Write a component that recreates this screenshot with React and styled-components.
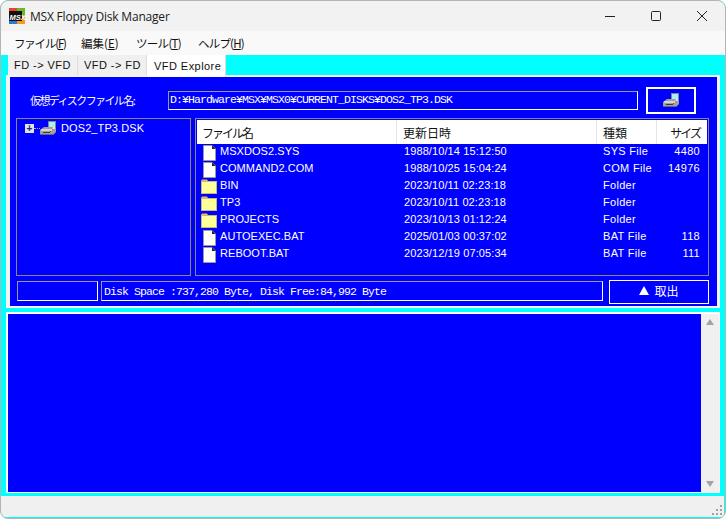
import React from "react";
import styled, { createGlobalStyle } from "styled-components";

const sans = `"Liberation Sans", Arial, sans-serif`;
const jp = `"Noto Sans CJK JP", sans-serif`;
const mono = `"Liberation Mono", "Courier New", monospace`;

const FILES = [
	{ name: "MSXDOS2.SYS", date: "1988/10/14 15:12:50", type: "SYS File", size: "4480", icon: "file" },
	{ name: "COMMAND2.COM", date: "1988/10/25 15:04:24", type: "COM File", size: "14976", icon: "file" },
	{ name: "BIN", date: "2023/10/11 02:23:18", type: "Folder", size: "", icon: "folder" },
	{ name: "TP3", date: "2023/10/11 02:23:18", type: "Folder", size: "", icon: "folder" },
	{ name: "PROJECTS", date: "2023/10/13 01:12:24", type: "Folder", size: "", icon: "folder" },
	{ name: "AUTOEXEC.BAT", date: "2025/01/03 00:37:02", type: "BAT File", size: "118", icon: "file" },
	{ name: "REBOOT.BAT", date: "2023/12/19 07:05:34", type: "BAT File", size: "111", icon: "file" },
];

const MENUS = [
	{ label: "ファイル", key: "F", width: 67, tight: 1.2 },
	{ label: "編集", key: "E", width: 55, tight: 0 },
	{ label: "ツール", key: "T", width: 62, tight: 0.7 },
	{ label: "ヘルプ", key: "H", width: 60, tight: 0.8 },
];

const Logo = () => (
	<svg width="16" height="16" viewBox="0 0 16 16">
		<rect x="0" y="0" width="8" height="8" fill="#e8442a" />
		<rect x="8" y="0" width="8" height="8" fill="#6cb52d" />
		<rect x="8" y="8" width="8" height="8" fill="#f59a1b" />
		<rect x="0" y="8" width="8" height="8" fill="#2a78d0" />
		<rect x="0" y="3" width="13" height="10" fill="#111" />
		<text x="0.5" y="11.5" fontFamily={sans} fontSize="7.5" fontWeight="700" fontStyle="italic" fill="#fff">
			MSX
		</text>
	</svg>
);

const Drive = () => (
	<svg width="17" height="15" viewBox="0 0 17 15">
		<rect x="8" y="0" width="8" height="9" fill="#7f8a90" />
		<rect x="9" y="1" width="6" height="5" fill="#a8f0f4" />
		<rect x="9" y="6" width="6" height="2" fill="#e4e8ea" />
		<polygon points="4,6 13,6 12,9 16,7 16,11 13,14 1,14 0,13 0,9" fill="#a0a0a0" />
		<rect x="1" y="8" width="11" height="2" fill="#d4d4d4" />
		<rect x="3" y="11" width="7" height="1" fill="#3c3c3c" />
		<rect x="10" y="10" width="1" height="1" fill="#d02020" />
		<rect x="1" y="13" width="12" height="1" fill="#6c6c6c" />
	</svg>
);

const FileIcon = () => (
	<svg width="13" height="16" viewBox="0 0 13 16">
		<path d="M0.5 0.5H9L12.5 4V15.5H0.5Z" fill="#fff" stroke="#9a9a9a" />
		<path d="M9 0.5L12.5 4H9Z" fill="#222" />
	</svg>
);

const FolderIcon = () => (
	<svg width="16" height="15" viewBox="0 0 16 15">
		<path d="M0 2L1 0.5H6L7 2H16V3H0Z" fill="#f4b860" />
		<rect x="0.5" y="2.5" width="15" height="12" fill="#ffff99" stroke="#c8b878" />
	</svg>
);

const MinimizeGlyph = () => (
	<svg width="10" height="10" viewBox="0 0 10 10">
		<path d="M0 5.5H10" stroke="#222" strokeWidth="1" />
	</svg>
);

const MaximizeGlyph = () => (
	<svg width="10" height="10" viewBox="0 0 10 10">
		<rect x="0.5" y="0.5" width="9" height="9" rx="1" fill="none" stroke="#222" />
	</svg>
);

const CloseGlyph = () => (
	<svg width="10" height="10" viewBox="0 0 10 10">
		<path d="M0 0L10 10M10 0L0 10" stroke="#222" strokeWidth="1" />
	</svg>
);

const App = () => (
	<>
		<GlobalStyle />
		<Window>
			<TitleBar>
				<Logo />
				<Title>MSX Floppy Disk Manager</Title>
				<Controls>
					<ControlButton>
						<MinimizeGlyph />
					</ControlButton>
					<ControlButton>
						<MaximizeGlyph />
					</ControlButton>
					<ControlButton>
						<CloseGlyph />
					</ControlButton>
				</Controls>
			</TitleBar>
			<MenuBar>
				{MENUS.map((m) => (
					<MenuItem key={m.key} $width={m.width} $tight={m.tight}>
						{m.label}(<u>{m.key}</u>)
					</MenuItem>
				))}
			</MenuBar>
			<Workspace>
				<Tabs>
					<Tab $w={70}>FD -&gt; VFD</Tab>
					<Tab $w={69}>VFD -&gt; FD</Tab>
					<Tab $w={79} $active>
						VFD Explore
					</Tab>
				</Tabs>
				<TabPanel>
					<BluePane>
						<PathRow>
							<PathLabel>仮想ディスクファイル名:</PathLabel>
							<PathField>D:¥Hardware¥MSX¥MSX0¥CURRENT_DISKS¥DOS2_TP3.DSK</PathField>
							<MountButton>
								<Drive />
							</MountButton>
						</PathRow>
						<Browser>
							<TreePane>
								<TreeRow>
									<Expander>+</Expander>
									<TreeDots />
									<Drive />
									<TreeLabel>DOS2_TP3.DSK</TreeLabel>
								</TreeRow>
							</TreePane>
							<ListPane>
								<ListHeader>
									<HeaderCell $w={200}>ファイル名</HeaderCell>
									<HeaderCell $w={200} $plain>
										更新日時
									</HeaderCell>
									<HeaderCell $w={60} $plain>
										種類
									</HeaderCell>
									<HeaderCell $w={50} $right>
										サイズ
									</HeaderCell>
								</ListHeader>
								{FILES.map((f) => (
									<FileRow key={f.name}>
										<NameCell>
											<IconSlot>{f.icon === "file" ? <FileIcon /> : <FolderIcon />}</IconSlot>
											<FileName>{f.name}</FileName>
										</NameCell>
										<DateCell>{f.date}</DateCell>
										<TypeCell>{f.type}</TypeCell>
										<SizeCell>{f.size}</SizeCell>
									</FileRow>
								))}
							</ListPane>
						</Browser>
						<FooterRow>
							<BlankBox />
							<StatusBox>Disk Space :737,280 Byte, Disk Free:84,992 Byte</StatusBox>
							<EjectButton>
								<EjectMark />
								取出
							</EjectButton>
						</FooterRow>
					</BluePane>
				</TabPanel>
				<LogPane>
					<LogText />
					<ScrollBar>
						<ScrollArrow />
						<ScrollArrow $down />
					</ScrollBar>
				</LogPane>
			</Workspace>
			<StatusBar>
				<Grip viewBox="0 0 11 11" width="11" height="11">
					<rect x="8" y="0" width="2" height="2" />
					<rect x="4" y="4" width="2" height="2" />
					<rect x="8" y="4" width="2" height="2" />
					<rect x="0" y="8" width="2" height="2" />
					<rect x="4" y="8" width="2" height="2" />
					<rect x="8" y="8" width="2" height="2" />
				</Grip>
			</StatusBar>
		</Window>
	</>
);

const GlobalStyle = createGlobalStyle`
	html, body {
		margin: 0;
		padding: 0;
		background: #ffffff;
		overflow: hidden;
	}
	* {
		box-sizing: border-box;
	}
`;

const Window = styled.div`
	display: flex;
	flex-direction: column;
	width: 726px;
	height: 519px;
	padding-bottom: 1px;
	overflow: hidden;
	border: 1px solid #b4b4b4;
	border-radius: 8px;
	background: #00ffff;
`;

const TitleBar = styled.div`
	display: flex;
	align-items: center;
	flex: none;
	height: 30px;
	padding-left: 8px;
	background: #f2f2f2;
`;
const Title = styled.div`
	margin-left: 5px;
	font-family: "Open Sans", sans-serif;
	font-size: 12px;
	letter-spacing: -0.2px;
	color: #1a1a1a;
`;
const Controls = styled.div`
	display: flex;
	margin-left: auto;
	height: 100%;
`;
const ControlButton = styled.div`
	display: flex;
	align-items: center;
	justify-content: center;
	width: 46px;
`;

const MenuBar = styled.div`
	display: flex;
	align-items: center;
	flex: none;
	height: 24px;
	padding-left: 13px;
	background: #f9f9f9;
`;
const MenuItem = styled.div`
	width: ${(p) => p.$width}px;
	font-family: ${jp};
	font-size: 11.5px;
	letter-spacing: ${(p) => -p.$tight}px;
	color: #111;
	white-space: nowrap;
`;

const Workspace = styled.div`
	flex: 1;
	padding: 0 4px 0 5px;
`;

const Tabs = styled.div`
	display: flex;
	align-items: flex-end;
	height: 22px;
	margin-bottom: -2px;
	padding-left: 2px;
`;
const Tab = styled.div`
	position: relative;
	z-index: 1;
	display: flex;
	align-items: center;
	width: ${(p) => p.$w}px;
	height: ${(p) => (p.$active ? 22 : 20)}px;
	margin-bottom: ${(p) => (p.$active ? 0 : 2)}px;
	padding-left: ${(p) => (p.$active ? 7 : 6)}px;
	border-right: 1px solid #dcdcdc;
	background: ${(p) => (p.$active ? "#ffffff" : "#f0f0f0")};
	font-family: ${sans};
	font-size: 11px;
	letter-spacing: 0.45px;
	color: #111;
`;

const TabPanel = styled.div`
	width: 714px;
	padding: 2px 3px 2px 4px;
	background: #f4f4f4;
`;
const BluePane = styled.div`
	display: flex;
	flex-direction: column;
	gap: 4px;
	height: 229px;
	padding: 10px 8px 0 6px;
	background: #0000ff;
	color: #ffffff;
`;

const PathRow = styled.div`
	display: flex;
	align-items: center;
	height: 27px;
	padding-left: 14px;
`;
const PathLabel = styled.div`
	width: 138px;
	padding-bottom: 1px;
	font-family: ${jp};
	font-size: 11px;
	letter-spacing: -1.6px;
	white-space: nowrap;
`;
const PathField = styled.div`
	display: flex;
	align-items: center;
	width: 470px;
	height: 19px;
	padding: 0 0 3px 1px;
	border: 1px solid #ffffff;
	border-top-color: #9a9a9a;
	border-left-color: #9a9a9a;
	font-family: ${mono};
	font-size: 11.5px;
	letter-spacing: -0.9px;
	white-space: nowrap;
`;
const MountButton = styled.div`
	display: flex;
	align-items: center;
	justify-content: center;
	width: 50px;
	height: 27px;
	margin-left: 8px;
	border: 2px solid #ffffff;
`;

const Browser = styled.div`
	display: flex;
	gap: 4px;
	height: 158px;
`;
const TreePane = styled.div`
	width: 176px;
	padding: 2px 0 0 8px;
	border: 1px solid #888888;
`;
const TreeRow = styled.div`
	display: flex;
	align-items: center;
	height: 15px;
`;
const Expander = styled.div`
	display: flex;
	align-items: center;
	justify-content: center;
	width: 9px;
	height: 9px;
	background: #dfe2ea;
	font-family: ${sans};
	font-size: 10px;
	line-height: 9px;
	font-weight: 700;
	color: #1a2a6a;
`;
const TreeDots = styled.div`
	width: 6px;
	border-top: 1px dotted #b0b0c8;
`;
const TreeLabel = styled.div`
	margin-left: 4px;
	padding-bottom: 1px;
	font-family: ${sans};
	font-size: 11px;
	letter-spacing: 0.1px;
`;

const ListPane = styled.div`
	width: 514px;
	padding: 1px;
	border: 1px solid #888888;
`;
const ListHeader = styled.div`
	display: flex;
	height: 24px;
	background: #ffffff;
	color: #111;
`;
const HeaderCell = styled.div`
	display: flex;
	align-items: center;
	justify-content: ${(p) => (p.$right ? "flex-end" : "flex-start")};
	width: ${(p) => p.$w}px;
	padding: ${(p) => (p.$right ? "0 7px 0 0" : p.$plain ? "0 0 0 6px" : "0 0 0 5px")};
	border-right: ${(p) => (p.$right ? "none" : "1px solid #e4e4e4")};
	font-family: ${jp};
	font-size: 12px;
	letter-spacing: ${(p) => (p.$plain ? 0 : -2)}px;
	white-space: nowrap;
`;
const FileRow = styled.div`
	display: flex;
	align-items: center;
	height: 17px;
	font-family: ${sans};
	font-size: 11px;
	white-space: nowrap;
`;
const NameCell = styled.div`
	display: flex;
	align-items: center;
	width: 200px;
	letter-spacing: 0.05px;
`;
const IconSlot = styled.div`
	display: flex;
	align-items: center;
	justify-content: center;
	width: 16px;
	margin: 0 3px 0 4px;
`;
const FileName = styled.span`
	padding-bottom: 4px;
`;
const DateCell = styled.div`
	width: 200px;
	padding: 0 0 4px 7px;
	letter-spacing: 0.1px;
`;
const TypeCell = styled.div`
	width: 60px;
	padding: 0 0 4px 6px;
	letter-spacing: 0.3px;
`;
const SizeCell = styled.div`
	width: 50px;
	padding: 0 7px 4px 0;
	text-align: right;
	letter-spacing: 0.3px;
`;

const FooterRow = styled.div`
	display: flex;
	align-items: flex-start;
	padding-left: 1px;
`;
const BlankBox = styled.div`
	width: 81px;
	height: 20px;
	margin: 1px 3px 0 0;
	border: 1px solid #ffffff;
	border-top-color: #9a9a9a;
	border-left-color: #9a9a9a;
`;
const StatusBox = styled.div`
	display: flex;
	align-items: center;
	width: 502px;
	height: 20px;
	margin: 1px 6px 0 0;
	padding: 1px 0 0 2px;
	border: 1px solid #ffffff;
	border-top-color: #9a9a9a;
	border-left-color: #9a9a9a;
	font-family: ${mono};
	font-size: 11.5px;
	letter-spacing: -0.9px;
	white-space: nowrap;
`;
const EjectButton = styled.div`
	display: flex;
	align-items: center;
	justify-content: center;
	gap: 5px;
	width: 100px;
	height: 24px;
	padding-bottom: 3px;
	border: 1px solid #ffffff;
	font-family: ${jp};
	font-size: 12px;
`;
const EjectMark = styled.span`
	width: 0;
	height: 0;
	border-left: 5.5px solid transparent;
	border-right: 5.5px solid transparent;
	border-bottom: 9px solid #ffffff;
`;

const LogPane = styled.div`
	display: flex;
	width: 714px;
	height: 181px;
	margin-top: 4px;
	padding: 2px 1px 1px 2px;
	background: #ffffff;
`;
const LogText = styled.div`
	flex: 1;
	background: #0000ff;
`;
const ScrollBar = styled.div`
	display: flex;
	flex-direction: column;
	align-items: center;
	justify-content: space-between;
	width: 18px;
	padding: 5px 0;
	background: #f0f0f0;
`;
const ScrollArrow = styled.span`
	width: 0;
	height: 0;
	border-left: 4px solid transparent;
	border-right: 4px solid transparent;
	border-${(p) => (p.$down ? "top" : "bottom")}: 6px solid #a3a3a3;
`;

const StatusBar = styled.div`
	display: flex;
	align-items: flex-end;
	justify-content: flex-end;
	flex: none;
	height: 21px;
	margin-right: 1px;
	padding: 0 1px 1px 0;
	background: #f0f0f0;
`;
const Grip = styled.svg`
	fill: #a0a0a0;
`;

export default App;
